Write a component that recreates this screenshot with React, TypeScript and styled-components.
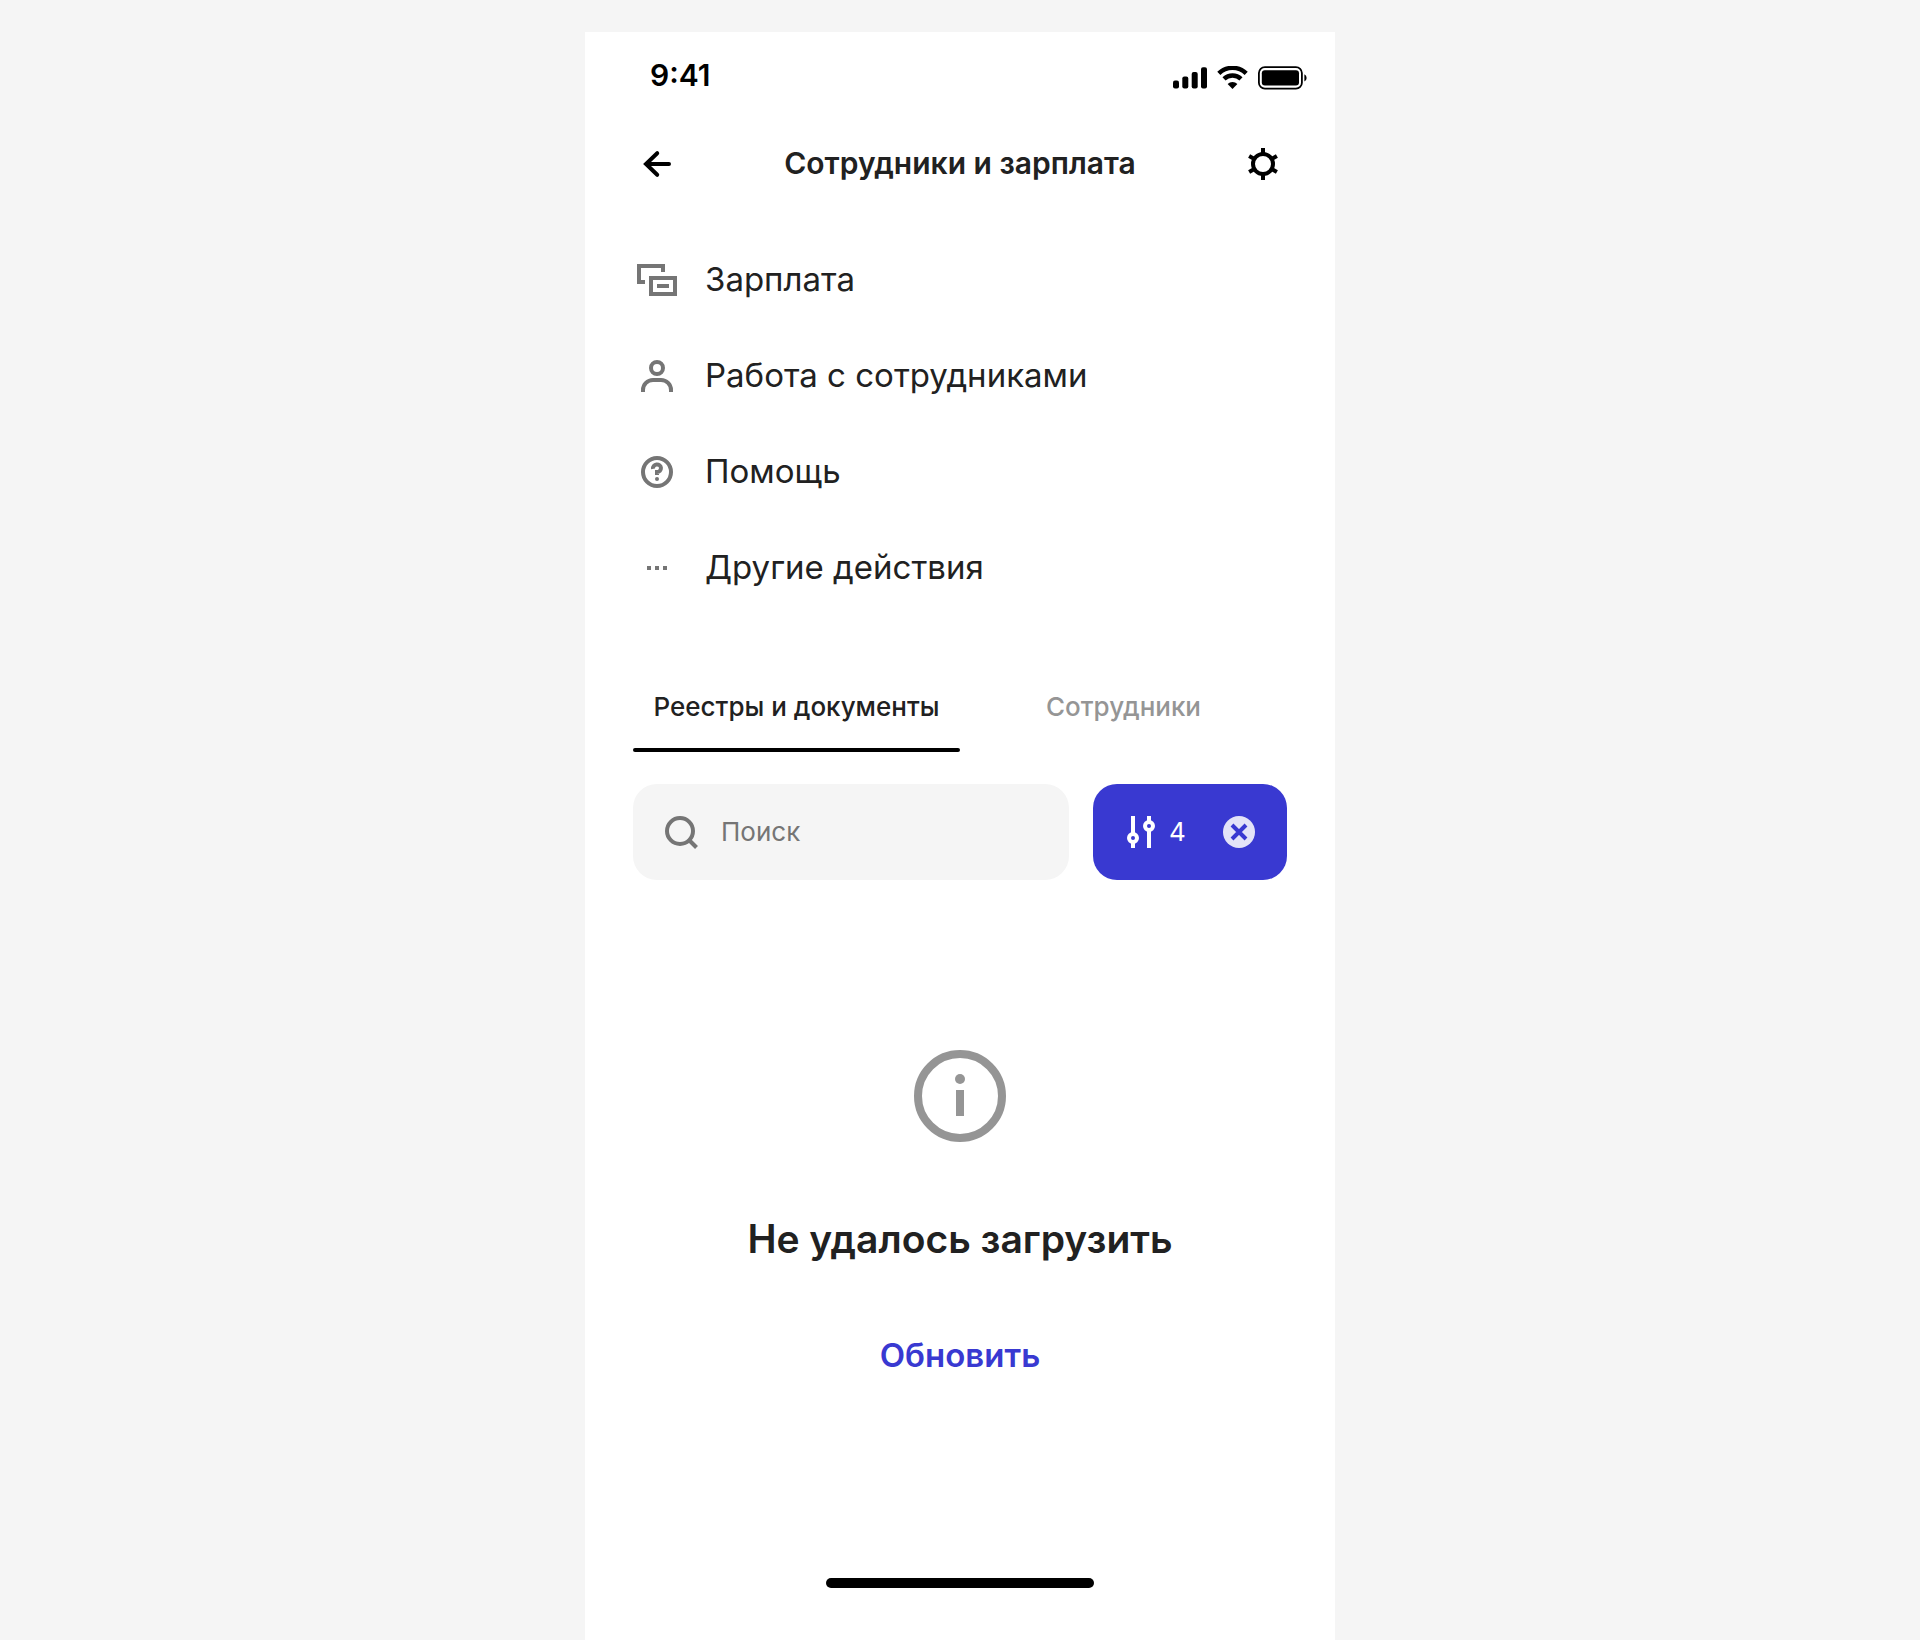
import React from 'react';
import styled, { createGlobalStyle } from 'styled-components';

const color = {
  page: '#f5f5f5',
  surface: '#ffffff',
  field: '#f5f5f5',
  text: '#212121',
  black: '#000000',
  icon: '#757575',
  muted: '#959595',
  accent: '#3939d1',
};

const GlobalStyle = createGlobalStyle`
  *, *::before, *::after { box-sizing: border-box; }
  body {
    margin: 0;
    background: ${color.page};
    color: ${color.text};
    font-family: Inter, "Liberation Sans", sans-serif;
  }
  button, input { font: inherit; color: inherit; }
  button { padding: 0; border: 0; background: none; cursor: pointer; }
`;

const Page = styled.div`
  display: flex;
  flex-direction: column;
  align-items: center;
  min-height: 100vh;
  padding-top: 32px;
`;

const Screen = styled.main`
  display: flex;
  flex: 1;
  flex-direction: column;
  width: 100%;
  max-width: 750px;
  background: ${color.surface};
`;

const StatusBar = styled.div`
  display: flex;
  align-items: center;
  justify-content: space-between;
  height: 88px;
  padding: 0 27px 2px 65px;
  color: ${color.black};
`;

const Clock = styled.time`
  font-size: 30px;
  font-weight: 600;
  line-height: 36px;
`;

const StatusIcons = styled.div`
  display: flex;
  align-items: center;
  gap: 10px;
  padding-top: 6px;

  svg { display: block; }
`;

const NavBar = styled.header`
  display: grid;
  grid-template-columns: 48px 1fr 48px;
  align-items: center;
  height: 88px;
  padding: 0 48px;
`;

const NavTitle = styled.h1`
  margin: 0;
  padding-bottom: 2px;
  font-size: 30px;
  font-weight: 600;
  line-height: 36px;
  text-align: center;
`;

const IconButton = styled.button`
  display: block;
  width: 48px;
  height: 48px;
  color: ${color.black};
`;

const Icon = styled.svg`
  display: block;
  flex: none;
  width: 48px;
  height: 48px;
  fill: none;
  stroke: currentColor;
  stroke-width: 4;
`;

const Menu = styled.nav`
  display: flex;
  flex-direction: column;
  padding: 24px 48px;
`;

const MenuItem = styled.button`
  display: flex;
  align-items: center;
  gap: 24px;
  height: 96px;
  font-size: 33px;
  line-height: 40px;
  text-align: left;

  svg { color: ${color.icon}; }
`;

const MenuLabel = styled.span`
  padding-bottom: 2px;
`;

const Tabs = styled.div`
  display: grid;
  grid-template-columns: 1fr 1fr;
  height: 88px;
  margin: 24px 48px 32px;
`;

const Tab = styled.button<{ $active?: boolean }>`
  display: flex;
  flex-direction: column;
  justify-content: space-between;
  align-items: center;
  padding-top: 27px;
  font-size: 26px;
  font-weight: 500;
  line-height: 32px;
  white-space: nowrap;
  color: ${(p) => (p.$active ? color.text : color.muted)};

  &::after {
    content: '';
    width: 100%;
    height: 4px;
    border-radius: 2px;
    background: ${(p) => (p.$active ? color.black : 'transparent')};
  }
`;

const Tools = styled.div`
  display: flex;
  gap: 24px;
  padding: 0 48px;
`;

const SearchField = styled.label`
  display: flex;
  flex: 1;
  align-items: center;
  gap: 16px;
  min-width: 0;
  height: 96px;
  padding: 0 24px;
  border-radius: 24px;
  background: ${color.field};
  color: ${color.icon};
`;

const SearchInput = styled.input`
  flex: 1;
  min-width: 0;
  padding: 0;
  border: 0;
  outline: 0;
  background: none;
  color: ${color.text};
  font-size: 26px;
  line-height: 32px;

  &::placeholder { color: ${color.icon}; opacity: 1; }
`;

const FilterGroup = styled.div`
  display: flex;
  align-items: center;
  justify-content: space-between;
  width: 194px;
  height: 96px;
  padding: 0 24px;
  border-radius: 24px;
  background: ${color.accent};
  color: ${color.surface};
`;

const FilterButton = styled.button`
  display: flex;
  align-items: center;
  gap: 4px;
  font-size: 26px;
  line-height: 32px;
`;

const EmptyState = styled.section`
  display: flex;
  flex-direction: column;
  align-items: center;
  padding: 168px 48px;
`;

const InfoIcon = styled.svg`
  display: block;
  width: 96px;
  height: 96px;
  color: ${color.muted};
`;

const EmptyTitle = styled.h2`
  margin: 71px 0 72px;
  font-size: 39px;
  font-weight: 600;
  line-height: 48px;
  text-align: center;
`;

const RetryButton = styled.button`
  color: ${color.accent};
  font-size: 33px;
  font-weight: 600;
  line-height: 40px;
`;

const HomeIndicator = styled.div`
  align-self: center;
  width: 268px;
  height: 10px;
  margin: auto 0 52px;
  border-radius: 5px;
  background: ${color.black};
`;

const SalaryIcon = () => (
  <Icon viewBox="0 0 48 48" aria-hidden="true">
    <path d="M12 26H6V10H30V16" />
    <rect x="18" y="22" width="24" height="16" />
    <path d="M24 30H36" />
  </Icon>
);

const UserIcon = () => (
  <Icon viewBox="0 0 48 48" aria-hidden="true">
    <circle cx="24" cy="16" r="6" />
    <path d="M10 40V38A10 10 0 0 1 20 28H28A10 10 0 0 1 38 38V40" />
  </Icon>
);

const HelpIcon = () => (
  <Icon viewBox="0 0 48 48" aria-hidden="true">
    <circle cx="24" cy="24" r="14" />
    <path d="M20 20.8A4 3.8 0 1 1 24 24V27" />
    <circle cx="24" cy="31" r="2" fill="currentColor" stroke="none" />
  </Icon>
);

const MoreIcon = () => (
  <Icon viewBox="0 0 48 48" aria-hidden="true">
    <path d="M14 24H18M22 24H26M30 24H34" />
  </Icon>
);

const menu = [
  { label: 'Зарплата', Glyph: SalaryIcon },
  { label: 'Работа с сотрудниками', Glyph: UserIcon },
  { label: 'Помощь', Glyph: HelpIcon },
  { label: 'Другие действия', Glyph: MoreIcon },
];

export default function App() {
  return (
    <Page>
      <GlobalStyle />
      <Screen>
        <StatusBar>
          <Clock>9:41</Clock>
          <StatusIcons>
            <svg width="34" height="24" viewBox="0 0 34 24" fill="currentColor" aria-hidden="true">
              <rect x="0" y="14.5" width="6" height="8" rx="2" />
              <rect x="9.3" y="10.5" width="6" height="12" rx="2" />
              <rect x="18.7" y="6" width="6" height="16.5" rx="2" />
              <rect x="28" y="1.3" width="6" height="21.2" rx="2" />
            </svg>
            <svg width="31" height="24" viewBox="0 0 31 24" fill="none" stroke="currentColor" strokeWidth="4.4" aria-hidden="true">
              <path d="M1.8 7.4A19.6 19.6 0 0 1 29.2 7.4" />
              <path d="M7 12.9A12.2 12.2 0 0 1 24 12.9" />
              <path d="M10.6 18.1A7 7 0 0 1 20.4 18.1L15.5 23Z" fill="currentColor" stroke="none" />
            </svg>
            <svg width="50" height="24" viewBox="0 0 50 24" aria-hidden="true">
              <rect x="0.9" y="1.1" width="43" height="21.6" rx="6" fill="none" stroke="currentColor" strokeWidth="1.8" />
              <rect x="3.8" y="4.2" width="37.2" height="15.4" rx="3" fill="currentColor" />
              <path d="M46.4 8.2A4.2 4.2 0 0 1 46.4 15.6Z" fill="currentColor" />
            </svg>
          </StatusIcons>
        </StatusBar>

        <NavBar>
          <IconButton type="button" aria-label="Назад">
            <Icon viewBox="0 0 48 48" aria-hidden="true" strokeLinecap="round">
              <path d="M24.2 13.2L13 24L24.2 34.8M14 24H36" />
            </Icon>
          </IconButton>
          <NavTitle>Сотрудники и зарплата</NavTitle>
          <IconButton type="button" aria-label="Настройки">
            <Icon viewBox="0 0 48 48" aria-hidden="true">
              <circle cx="24" cy="24" r="10" />
              {[0, 60, 120, 180, 240, 300].map((angle) => (
                <path key={angle} d="M24 13V8" transform={`rotate(${angle} 24 24)`} />
              ))}
            </Icon>
          </IconButton>
        </NavBar>

        <Menu>
          {menu.map(({ label, Glyph }) => (
            <MenuItem key={label} type="button">
              <Glyph />
              <MenuLabel>{label}</MenuLabel>
            </MenuItem>
          ))}
        </Menu>

        <Tabs role="tablist">
          <Tab type="button" role="tab" aria-selected="true" $active>
            Реестры и документы
          </Tab>
          <Tab type="button" role="tab" aria-selected="false">
            Сотрудники
          </Tab>
        </Tabs>

        <Tools>
          <SearchField>
            <Icon viewBox="0 0 48 48" aria-hidden="true">
              <circle cx="23" cy="23" r="13" />
              <path d="M31.5 31.5L39.5 39.5" />
            </Icon>
            <SearchInput type="search" placeholder="Поиск" aria-label="Поиск" />
          </SearchField>
          <FilterGroup>
            <FilterButton type="button" aria-label="Фильтры: 4">
              <Icon viewBox="0 0 48 48" aria-hidden="true">
                <path d="M16 8V26M16 34V40M32 8V14M32 22V40" />
                <circle cx="16" cy="30" r="4" />
                <circle cx="32" cy="18" r="4" />
              </Icon>
              4
            </FilterButton>
            <IconButton type="button" aria-label="Сбросить фильтры">
              <Icon viewBox="0 0 48 48" aria-hidden="true">
                <circle cx="24" cy="24" r="16" fill="#e3e3f8" stroke="none" />
                <path d="M17 17L31 31M31 17L17 31" stroke={color.accent} />
              </Icon>
            </IconButton>
          </FilterGroup>
        </Tools>

        <EmptyState>
          <InfoIcon viewBox="0 0 96 96" fill="none" aria-hidden="true">
            <circle cx="48" cy="48" r="42" stroke="currentColor" strokeWidth="8" />
            <circle cx="48" cy="31" r="5" fill="currentColor" />
            <path d="M48 42V68" stroke="currentColor" strokeWidth="8" />
          </InfoIcon>
          <EmptyTitle>Не удалось загрузить</EmptyTitle>
          <RetryButton type="button">Обновить</RetryButton>
        </EmptyState>

        <HomeIndicator />
      </Screen>
    </Page>
  );
}
